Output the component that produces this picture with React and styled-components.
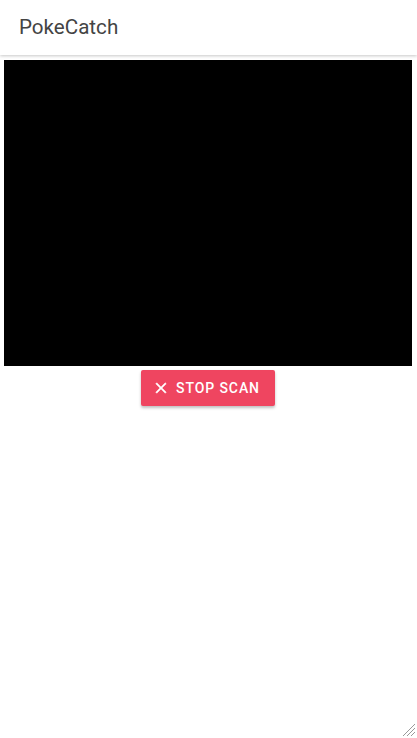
import React from "react";
import styled, { createGlobalStyle } from "styled-components";

const GlobalStyle = createGlobalStyle`
  html, body {
    margin: 0;
    padding: 0;
    background: #fff;
    font-family: Roboto, "Liberation Sans", sans-serif;
  }
`;

function App() {
  return (
    <Page>
      <GlobalStyle />
      <Header>
        <Title>PokeCatch</Title>
      </Header>
      <Main>
        <Video />
        <StopButton type="button">
          <CloseIcon viewBox="0 0 24 24" aria-hidden="true">
            <path d="M19 6.41 17.59 5 12 10.59 6.41 5 5 6.41 10.59 12 5 17.59 6.41 19 12 13.41 17.59 19 19 17.59 13.41 12z" />
          </CloseIcon>
          Stop scan
        </StopButton>
      </Main>
      <Resizer viewBox="0 0 14 14" aria-hidden="true">
        <path d="M13 1 L1 13 M13 5 L5 13 M13 9 L9 13" />
      </Resizer>
    </Page>
  );
}

const Page = styled.div`
  position: relative;
  width: 417px;
  height: 738px;
  overflow: hidden;
`;

const Header = styled.header`
  height: 55px;
  display: flex;
  align-items: center;
  padding: 0 19px 2px;
  box-sizing: border-box;
  background: #fff;
  box-shadow: 0 1px 3px rgba(0, 0, 0, 0.22);
`;

const Title = styled.h1`
  margin: 0;
  font-size: 20.6px;
  font-weight: 400;
  color: #444;
`;

const Main = styled.main`
  display: flex;
  flex-direction: column;
  align-items: center;
  gap: 4px;
  padding: 5px 5px 0 4px;
`;

const Video = styled.div`
  width: 408px;
  height: 306px;
  background: #000;
`;

const StopButton = styled.button`
  display: flex;
  align-items: center;
  gap: 6px;
  height: 36px;
  padding: 0 15px 0 11px;
  border: none;
  border-radius: 2px;
  background: #ef4560;
  color: #fff;
  font-family: Roboto, "Liberation Sans", sans-serif;
  font-size: 14px;
  font-weight: 500;
  letter-spacing: 0.9px;
  text-transform: uppercase;
  box-shadow: 0 2px 3px rgba(0, 0, 0, 0.25);
`;

const CloseIcon = styled.svg`
  width: 18px;
  height: 18px;
  fill: #fff;
  stroke: #fff;
  stroke-width: 0.6;
`;

const Resizer = styled.svg`
  position: absolute;
  right: 1px;
  bottom: 1px;
  width: 14px;
  height: 14px;
  stroke: #999;
  stroke-width: 1;
  fill: none;
`;

export default App;
